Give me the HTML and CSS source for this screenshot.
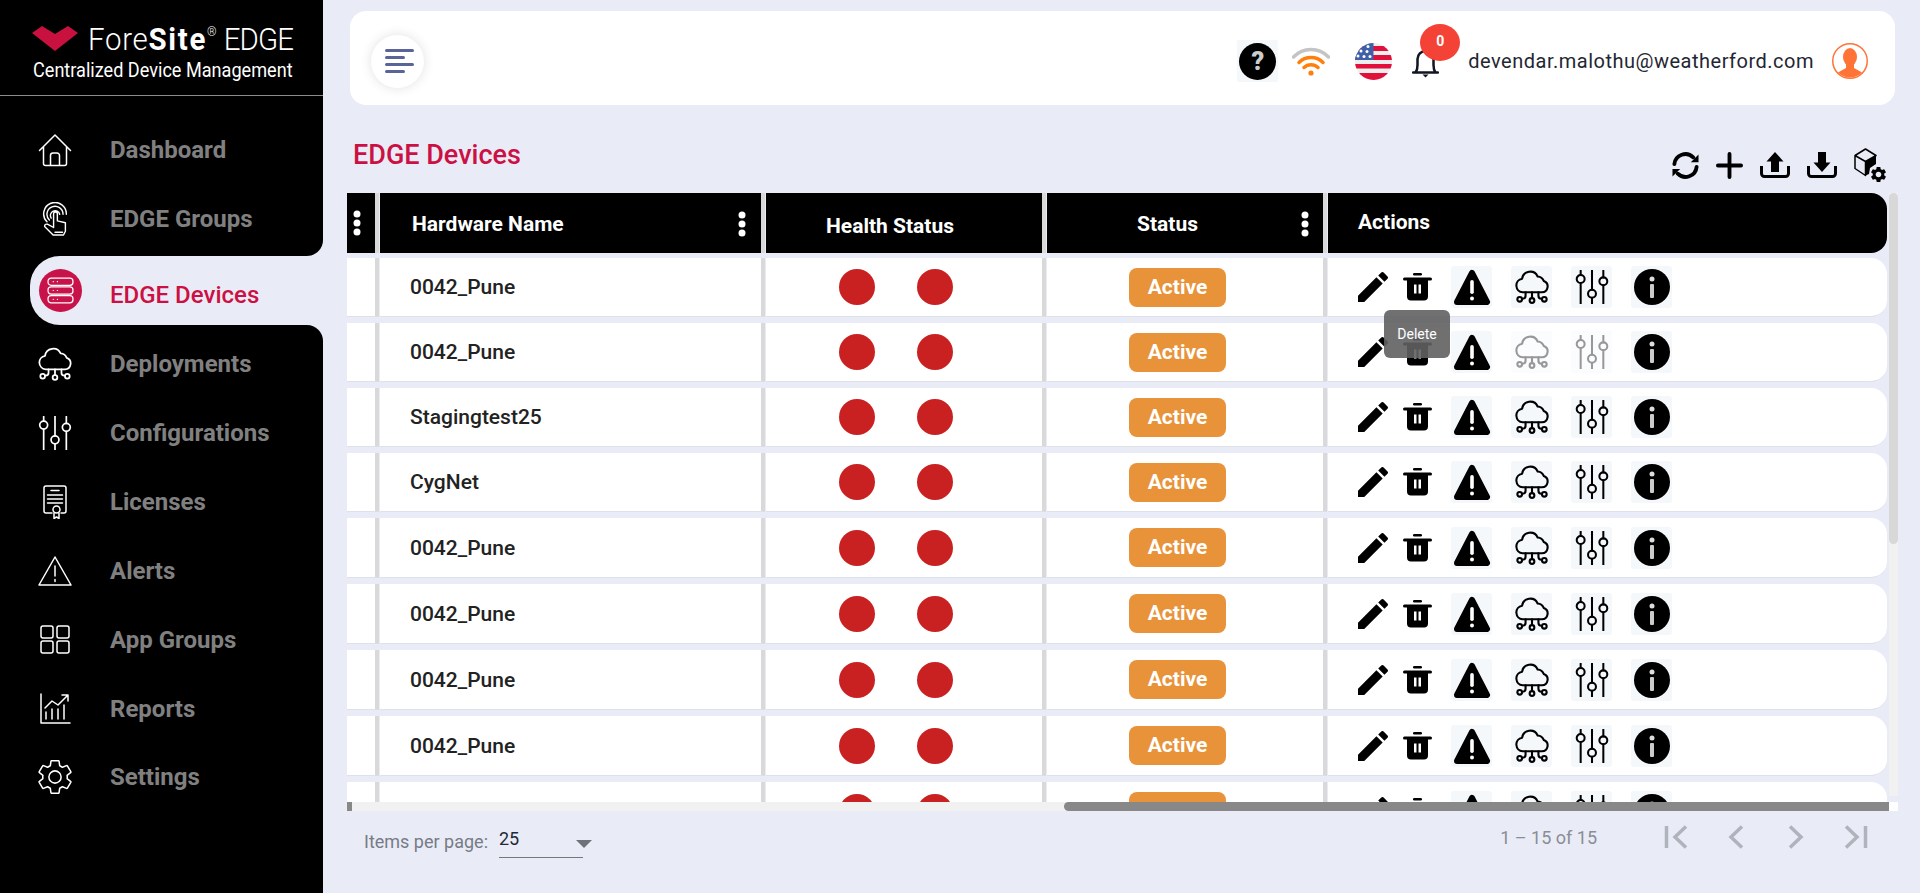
FILE: index.html
```html
<!DOCTYPE html>
<html>
<head>
    <meta charset="utf-8">
    <title>ForeSite EDGE - EDGE Devices</title>
    <link rel="stylesheet" href="styles.css">
</head>
<body>

<!-- shared icons -->
<svg class="icon-defs" xmlns="http://www.w3.org/2000/svg">
    <symbol id="i-cloud" viewBox="2 1 28 29">
        <path d="M8 20H24.500A5 5 0 0 0 26 10.300A6 6 0 0 0 20.800 6.500A7 7 0 0 0 7.500 8.500A5.800 5.800 0 0 0 8 20Z"/>
        <path d="M16 20V25M10.500 20V23Q10.500 25.500 8 25.500H7.500M21.500 20V23Q21.500 25.500 24 25.500H24.500"/>
        <circle cx="5.500" cy="26" r="2"/><circle cx="16" cy="27" r="2"/><circle cx="26.500" cy="26" r="2"/>
    </symbol>
    <symbol id="i-sliders" viewBox="2 1 28 30">
        <path d="M6 1.500V5.500M6 12.500V31M16 1V18.500M16 25.500V31M26 1.500V7.500M26 14.500V31"/>
        <circle cx="6" cy="9" r="3.500"/><circle cx="16" cy="22" r="3.500"/><circle cx="26" cy="11" r="3.500"/>
    </symbol>
    <symbol id="i-pencil" viewBox="3 3 18 18">
        <path d="M3 17.250V21h3.750L17.810 9.940l-3.750-3.750L3 17.250zM20.710 7.040c.39-.39.39-1.020 0-1.410l-2.340-2.340c-.39-.39-1.020-.39-1.410 0l-1.830 1.830 3.750 3.750 1.830-1.830z"/>
    </symbol>
    <symbol id="i-trash" viewBox="0 0 29 28">
        <rect x="10" y="0" width="9" height="2.600" rx="1.300"/>
        <rect x="0" y="4.500" width="29" height="3" rx="1.500"/>
        <path fill-rule="evenodd" d="M4 7H25V23.500A4 4 0 0 1 21 27.500H8A4 4 0 0 1 4 23.500ZM11 11.500V20.500H13.500V11.500ZM15.500 11.500V20.500H18V11.500Z"/>
    </symbol>
    <symbol id="i-warn" viewBox="0 0 38 36">
        <path d="M19 4L34 33H4Z" fill="#000" stroke="#000" stroke-width="6" stroke-linejoin="round"/>
        <rect x="17.200" y="11" width="3.600" height="14" rx="1.800" fill="#fff"/>
        <circle cx="19" cy="29.500" r="2" fill="#fff"/>
    </symbol>
    <symbol id="i-info" viewBox="0 0 36 36">
        <circle cx="18" cy="18" r="18" fill="#000"/>
        <circle cx="18" cy="10" r="2.500" fill="#ddd"/>
        <rect x="16" y="15" width="4" height="14" rx="1" fill="#ccc"/>
    </symbol>
    <symbol id="i-kebab" viewBox="0 0 8 26">
        <circle cx="4" cy="4" r="3.500"/><circle cx="4" cy="13" r="3.500"/><circle cx="4" cy="22" r="3.500"/>
    </symbol>
    <symbol id="i-gear" viewBox="0 0 24 24">
        <path d="M19.140 12.940c.04-.3.06-.61.06-.94 0-.32-.02-.64-.07-.94l2.030-1.580a.49.49 0 0 0 .12-.61l-1.920-3.320a.488.488 0 0 0-.59-.22l-2.390.96c-.5-.38-1.030-.7-1.620-.94l-.36-2.540a.484.484 0 0 0-.48-.41h-3.840c-.24 0-.43.17-.47.41l-.36 2.540c-.59.24-1.130.57-1.620.94l-2.390-.96c-.22-.08-.47 0-.59.22L2.740 8.870c-.12.21-.08.47.12.61l2.030 1.580c-.05.3-.09.63-.09.94s.02.64.07.94l-2.030 1.580a.49.49 0 0 0-.12.61l1.920 3.320c.12.22.37.29.59.22l2.390-.96c.5.38 1.030.7 1.620.94l.36 2.540c.05.24.24.41.48.41h3.840c.24 0 .44-.17.47-.41l.36-2.540c.59-.24 1.130-.56 1.620-.94l2.390.96c.22.08.47 0 .59-.22l1.920-3.320c.12-.22.07-.47-.12-.61l-2.010-1.580zM12 15.600c-1.980 0-3.600-1.620-3.600-3.600s1.620-3.600 3.600-3.600 3.600 1.620 3.600 3.600-1.620 3.600-3.600 3.600z"/>
    </symbol>
</svg>

<div class="sidebar">
    <div class="brand">
        <div class="brand-top">
            <svg class="brand-mark" viewBox="0 0 46 26"><path d="M0 7L10 0L23 8L36 0L46 7L23 25Z"/></svg>
            <span class="brand-name"><span class="brand-fore">Fore</span><b>Site</b><sup>®</sup> <span class="brand-edge">EDGE</span></span>
        </div>
        <div class="brand-sub">Centralized Device Management</div>
    </div>

    <ul class="nav">
        <li class="nav-item">
            <svg class="nav-icon" viewBox="0 0 34 34"><path d="M1.500 17.500L17 2L32.500 17.500M5.500 14V30.500A2 2 0 0 0 7.500 32.500H26.500A2 2 0 0 0 28.500 30.500V14M12.500 32.500V22.500A2.500 2.500 0 0 1 15 20H19A2.500 2.500 0 0 1 21.500 22.500V32.500"/></svg>
            <span>Dashboard</span>
        </li>
        <li class="nav-item before-active">
            <svg class="nav-icon" viewBox="0 0 26 36"><path d="M4.500 21A12 12 0 1 1 25 13M7 19A8.500 8.500 0 1 1 21.500 13M9 17A5 5 0 1 1 18 13M11.500 27V12.500A2 2 0 0 1 15.500 12.500V20L24 22V31L22 35H11L2 26Q2 23 5 23.500L11.500 27M13 32H21"/></svg>
            <span>EDGE Groups</span>
        </li>
        <li class="nav-item active">
            <a class="nav-link">
                <span class="active-badge">
                    <svg viewBox="0 0 26 26"><rect x="1" y="1" width="24" height="7" rx="3"/><rect x="1" y="9.500" width="24" height="7" rx="3"/><rect x="1" y="18" width="24" height="7" rx="3"/><path d="M6 4.500H6.100M10 4.500H10.100M6 13H6.100M10 13H10.100M6 21.500H6.100M10 21.500H10.100"/></svg>
                </span>
                <span class="active-text">EDGE Devices</span>
            </a>
        </li>
        <li class="nav-item after-active">
            <svg class="nav-icon"><use href="#i-cloud"/></svg>
            <span>Deployments</span>
        </li>
        <li class="nav-item">
            <svg class="nav-icon"><use href="#i-sliders"/></svg>
            <span>Configurations</span>
        </li>
        <li class="nav-item">
            <svg class="nav-icon" viewBox="0 0 34 34"><path d="M14 28H8A2 2 0 0 1 6 26V3A2 2 0 0 1 8 1H26A2 2 0 0 1 28 3V26A2 2 0 0 1 26 28H23M13 5.500H21M9.500 10H24.500M9.500 14H24.500M9.500 18H24.500M16 28V33.500L18.500 32L21 33.500V28"/><circle cx="18.500" cy="24.500" r="3.500"/></svg>
            <span>Licenses</span>
        </li>
        <li class="nav-item">
            <svg class="nav-icon" viewBox="0 0 34 34"><path d="M17 3L33 31H1ZM17 12V22M17 25.500V27.500"/></svg>
            <span>Alerts</span>
        </li>
        <li class="nav-item">
            <svg class="nav-icon" viewBox="0 0 34 34"><rect x="3" y="3" width="12" height="12" rx="2"/><rect x="19" y="3" width="12" height="12" rx="2"/><rect x="3" y="18" width="12" height="12" rx="2"/><rect x="19" y="18" width="12" height="12" rx="2"/></svg>
            <span>App Groups</span>
        </li>
        <li class="nav-item">
            <svg class="nav-icon" viewBox="0 0 34 34"><path d="M3 2V31H32M8 27V20M14 27V17M20 27V17M26 27V13M7 16L14 9L20 13L30 3M24 3H30V9"/></svg>
            <span>Reports</span>
        </li>
        <li class="nav-item">
            <svg class="nav-icon nav-gear" viewBox="2 2 20 20"><use href="#i-gear" width="24" height="24"/></svg>
            <span class="last-text">Settings</span>
        </li>
    </ul>
</div>

<div class="main">
    <div class="topbar">
        <div class="menu-btn">
            <span class="bar"></span><span class="bar short"></span><span class="bar"></span><span class="bar short"></span>
        </div>

        <div class="help-box">
            <span class="help">?</span>
        </div>
        <svg class="wifi" viewBox="0 0 38 32">
            <path class="wifi-off" d="M1.500 12A24 24 0 0 1 36.500 12"/>
            <path d="M7 17.500A17 17 0 0 1 31 17.500M12 22.500A10 10 0 0 1 26 22.500"/>
            <circle cx="19" cy="28" r="2.600"/>
        </svg>
        <svg class="flag" viewBox="0 0 37 37">
            <clipPath id="flag-clip"><circle cx="18.500" cy="18.500" r="18.500"/></clipPath>
            <g clip-path="url(#flag-clip)">
                <rect width="37" height="37" fill="#eeeeee"/>
                <rect y="3" width="37" height="5" fill="#e0103a"/>
                <rect y="12" width="37" height="5" fill="#e0103a"/>
                <rect y="21" width="37" height="4.500" fill="#e0103a"/>
                <rect y="30" width="37" height="7" fill="#e0103a"/>
                <rect width="18.500" height="17" fill="#3f60a8"/>
                <g fill="#fff"><circle cx="13" cy="3.500" r="1.500"/><circle cx="6" cy="8" r="1.500"/><circle cx="12" cy="8.500" r="1.500"/><circle cx="3" cy="13" r="1.500"/><circle cx="9" cy="13.500" r="1.500"/><circle cx="15" cy="13.500" r="1.500"/></g>
            </g>
        </svg>
        <div class="bell-wrap">
            <svg class="bell" viewBox="0 0 27 30">
                <path d="M1 24.500H26M3.500 24.500C5 22.500 5.500 20 5.500 17V11A8 8 0 0 1 21.500 11V17C21.500 20 22 22.500 23.500 24.500"/>
                <path class="bell-clap" d="M10.500 26.500H16.500L13.500 29.500Z"/>
            </svg>
            <span class="badge">0</span>
        </div>
        <span class="user-mail">devendar.malothu@weatherford.com</span>
        <svg class="avatar" viewBox="0 0 36 36">
            <clipPath id="avatar-clip"><circle cx="18" cy="18" r="16.500"/></clipPath>
            <circle cx="18" cy="18" r="17.250" fill="#fff" stroke="#ff7337" stroke-width="1.500"/>
            <g clip-path="url(#avatar-clip)" fill="#ff7337">
                <ellipse cx="18" cy="14" rx="7" ry="9"/>
                <path d="M14 20H22V25L31 30V36H5V30L14 25Z"/>
            </g>
        </svg>
    </div>

    <div class="title-row">
        <h1 class="page-title">EDGE Devices</h1>
        <div class="toolbar">
            <svg class="tool refresh" viewBox="0 0 28 28">
                <path class="tool-line" d="M2.500 12.500A11.500 11.500 0 0 1 22 5.500M25.500 15.500A11.500 11.500 0 0 1 6 22.500"/>
                <path d="M27.500 2.500V10.500H19.500ZM.5 25.500V17.500H8.500Z"/>
            </svg>
            <svg class="tool plus" viewBox="0 0 28 28">
                <path class="tool-line" d="M14 2V26M2 14H26"/>
            </svg>
            <svg class="tool load" viewBox="0 0 30 26">
                <path class="tray" d="M1.500 14V21.500A3 3 0 0 0 4.500 24.500H25.500A3 3 0 0 0 28.500 21.500V14"/>
                <path d="M15 0L23.500 9.500H19V20H11V9.500H6.500Z"/>
            </svg>
            <svg class="tool load" viewBox="0 0 30 26">
                <path class="tray" d="M1.500 14V21.500A3 3 0 0 0 4.500 24.500H25.500A3 3 0 0 0 28.500 21.500V14"/>
                <path d="M11 0H19V10.500H23.500L15 20L6.500 10.500H11Z"/>
            </svg>
            <svg class="tool box" viewBox="0 0 34 36">
                <path class="box-line" d="M11.500 1L22 7.500L11.500 13.500L1 7.500ZM1 7.500V20.500L11.500 27.500V13.500"/>
                <path d="M11.500 13.500L22 7.500V16L16 20L15 26L11.500 27.500Z"/>
                <svg x="15" y="17" width="19" height="19" viewBox="0 0 24 24"><use href="#i-gear" width="24" height="24"/></svg>
            </svg>
        </div>
    </div>

    <div class="table-area">
        <div class="table-view">
            <div class="tbl-row tbl-head">
                <div class="th th-first"><svg class="kebab"><use href="#i-kebab"/></svg></div>
                <div class="th th-name"><span>Hardware Name</span><svg class="kebab"><use href="#i-kebab"/></svg></div>
                <div class="th th-health"><span>Health Status</span></div>
                <div class="th th-status"><span>Status</span><svg class="kebab"><use href="#i-kebab"/></svg></div>
                <div class="th th-actions"><span>Actions</span></div>
            </div>

            <div class="tbl-row">
                <div class="td"></div>
                <div class="td td-name">0042_Pune</div>
                <div class="td td-health"><i class="dot"></i><i class="dot"></i></div>
                <div class="td td-status"><span class="pill">Active</span></div>
                <div class="td td-actions">
                    <svg class="act-pencil"><use href="#i-pencil"/></svg>
                    <div class="act-trash">
                        <svg class="trash-svg"><use href="#i-trash"/></svg>
                        <div class="tooltip">Delete</div>
                    </div>
                    <div class="act-box"><svg class="warn-svg"><use href="#i-warn"/></svg></div>
                    <div class="act-box"><svg class="line-svg"><use href="#i-cloud"/></svg></div>
                    <div class="act-box"><svg class="line-svg"><use href="#i-sliders"/></svg></div>
                    <div class="act-box"><svg class="info-svg"><use href="#i-info"/></svg></div>
                </div>
            </div>

            <div class="tbl-row">
                <div class="td"></div>
                <div class="td td-name">0042_Pune</div>
                <div class="td td-health"><i class="dot"></i><i class="dot"></i></div>
                <div class="td td-status"><span class="pill">Active</span></div>
                <div class="td td-actions">
                    <svg class="act-pencil"><use href="#i-pencil"/></svg>
                    <div class="act-trash"><svg class="trash-svg"><use href="#i-trash"/></svg></div>
                    <div class="act-box"><svg class="warn-svg"><use href="#i-warn"/></svg></div>
                    <div class="act-box disabled"><svg class="line-svg"><use href="#i-cloud"/></svg></div>
                    <div class="act-box disabled"><svg class="line-svg"><use href="#i-sliders"/></svg></div>
                    <div class="act-box"><svg class="info-svg"><use href="#i-info"/></svg></div>
                </div>
            </div>

            <div class="tbl-row">
                <div class="td"></div>
                <div class="td td-name">Stagingtest25</div>
                <div class="td td-health"><i class="dot"></i><i class="dot"></i></div>
                <div class="td td-status"><span class="pill">Active</span></div>
                <div class="td td-actions">
                    <svg class="act-pencil"><use href="#i-pencil"/></svg>
                    <div class="act-trash"><svg class="trash-svg"><use href="#i-trash"/></svg></div>
                    <div class="act-box"><svg class="warn-svg"><use href="#i-warn"/></svg></div>
                    <div class="act-box"><svg class="line-svg"><use href="#i-cloud"/></svg></div>
                    <div class="act-box"><svg class="line-svg"><use href="#i-sliders"/></svg></div>
                    <div class="act-box"><svg class="info-svg"><use href="#i-info"/></svg></div>
                </div>
            </div>

            <div class="tbl-row">
                <div class="td"></div>
                <div class="td td-name">CygNet</div>
                <div class="td td-health"><i class="dot"></i><i class="dot"></i></div>
                <div class="td td-status"><span class="pill">Active</span></div>
                <div class="td td-actions">
                    <svg class="act-pencil"><use href="#i-pencil"/></svg>
                    <div class="act-trash"><svg class="trash-svg"><use href="#i-trash"/></svg></div>
                    <div class="act-box"><svg class="warn-svg"><use href="#i-warn"/></svg></div>
                    <div class="act-box"><svg class="line-svg"><use href="#i-cloud"/></svg></div>
                    <div class="act-box"><svg class="line-svg"><use href="#i-sliders"/></svg></div>
                    <div class="act-box"><svg class="info-svg"><use href="#i-info"/></svg></div>
                </div>
            </div>

            <div class="tbl-row row-tall">
                <div class="td"></div>
                <div class="td td-name">0042_Pune</div>
                <div class="td td-health"><i class="dot"></i><i class="dot"></i></div>
                <div class="td td-status"><span class="pill">Active</span></div>
                <div class="td td-actions">
                    <svg class="act-pencil"><use href="#i-pencil"/></svg>
                    <div class="act-trash"><svg class="trash-svg"><use href="#i-trash"/></svg></div>
                    <div class="act-box"><svg class="warn-svg"><use href="#i-warn"/></svg></div>
                    <div class="act-box"><svg class="line-svg"><use href="#i-cloud"/></svg></div>
                    <div class="act-box"><svg class="line-svg"><use href="#i-sliders"/></svg></div>
                    <div class="act-box"><svg class="info-svg"><use href="#i-info"/></svg></div>
                </div>
            </div>

            <div class="tbl-row row-tall">
                <div class="td"></div>
                <div class="td td-name">0042_Pune</div>
                <div class="td td-health"><i class="dot"></i><i class="dot"></i></div>
                <div class="td td-status"><span class="pill">Active</span></div>
                <div class="td td-actions">
                    <svg class="act-pencil"><use href="#i-pencil"/></svg>
                    <div class="act-trash"><svg class="trash-svg"><use href="#i-trash"/></svg></div>
                    <div class="act-box"><svg class="warn-svg"><use href="#i-warn"/></svg></div>
                    <div class="act-box"><svg class="line-svg"><use href="#i-cloud"/></svg></div>
                    <div class="act-box"><svg class="line-svg"><use href="#i-sliders"/></svg></div>
                    <div class="act-box"><svg class="info-svg"><use href="#i-info"/></svg></div>
                </div>
            </div>

            <div class="tbl-row row-tall">
                <div class="td"></div>
                <div class="td td-name">0042_Pune</div>
                <div class="td td-health"><i class="dot"></i><i class="dot"></i></div>
                <div class="td td-status"><span class="pill">Active</span></div>
                <div class="td td-actions">
                    <svg class="act-pencil"><use href="#i-pencil"/></svg>
                    <div class="act-trash"><svg class="trash-svg"><use href="#i-trash"/></svg></div>
                    <div class="act-box"><svg class="warn-svg"><use href="#i-warn"/></svg></div>
                    <div class="act-box"><svg class="line-svg"><use href="#i-cloud"/></svg></div>
                    <div class="act-box"><svg class="line-svg"><use href="#i-sliders"/></svg></div>
                    <div class="act-box"><svg class="info-svg"><use href="#i-info"/></svg></div>
                </div>
            </div>

            <div class="tbl-row row-tall">
                <div class="td"></div>
                <div class="td td-name">0042_Pune</div>
                <div class="td td-health"><i class="dot"></i><i class="dot"></i></div>
                <div class="td td-status"><span class="pill">Active</span></div>
                <div class="td td-actions">
                    <svg class="act-pencil"><use href="#i-pencil"/></svg>
                    <div class="act-trash"><svg class="trash-svg"><use href="#i-trash"/></svg></div>
                    <div class="act-box"><svg class="warn-svg"><use href="#i-warn"/></svg></div>
                    <div class="act-box"><svg class="line-svg"><use href="#i-cloud"/></svg></div>
                    <div class="act-box"><svg class="line-svg"><use href="#i-sliders"/></svg></div>
                    <div class="act-box"><svg class="info-svg"><use href="#i-info"/></svg></div>
                </div>
            </div>

            <div class="tbl-row row-tall">
                <div class="td"></div>
                <div class="td td-name"></div>
                <div class="td td-health"><i class="dot"></i><i class="dot"></i></div>
                <div class="td td-status"><span class="pill">Active</span></div>
                <div class="td td-actions">
                    <svg class="act-pencil"><use href="#i-pencil"/></svg>
                    <div class="act-trash"><svg class="trash-svg"><use href="#i-trash"/></svg></div>
                    <div class="act-box"><svg class="warn-svg"><use href="#i-warn"/></svg></div>
                    <div class="act-box"><svg class="line-svg"><use href="#i-cloud"/></svg></div>
                    <div class="act-box"><svg class="line-svg"><use href="#i-sliders"/></svg></div>
                    <div class="act-box"><svg class="info-svg"><use href="#i-info"/></svg></div>
                </div>
            </div>
        </div>

        <div class="v-scroll"><div class="v-thumb"></div></div>

        <div class="h-scroll">
            <span class="h-tick"></span>
            <span class="h-thumb"></span>
            <span class="h-corner"></span>
        </div>
    </div>

    <div class="pager">
        <div class="pager-left">
            <span class="pager-label">Items per page:</span>
            <div class="page-select">25<i class="select-arrow"></i></div>
        </div>
        <div class="pager-right">
            <span class="pager-range">1 – 15 of 15</span>
            <div class="pager-btn"><svg viewBox="0 0 24 24"><path d="M2.500 1V23M22 1.500L11 12L22 22.500"/></svg></div>
            <div class="pager-btn"><svg viewBox="0 0 24 24"><path d="M18 1.500L7 12L18 22.500"/></svg></div>
            <div class="pager-btn"><svg viewBox="0 0 24 24"><path d="M6 1.500L17 12L6 22.500"/></svg></div>
            <div class="pager-btn"><svg viewBox="0 0 24 24"><path d="M21.500 1V23M2 1.500L13 12L2 22.500"/></svg></div>
        </div>
    </div>
</div>

</body>
</html>
```

FILE: styles.css
```css
* {
    box-sizing: border-box;
}

html, body {
    margin: 0;
    height: 100%;
    overflow: hidden;
}

body {
    display: flex;
    background: #e9ecf7;
    font-family: Roboto, "Liberation Sans", sans-serif;
    color: #222;
}

.icon-defs {
    display: none;
}

/* Sidebar */
.sidebar {
    width: 323px;
    flex-shrink: 0;
    background: #000;
    display: flex;
    flex-direction: column;
}

.brand {
    height: 96px;
    flex-shrink: 0;
    padding: 26px 0 0 32px;
    border-bottom: 1px solid #8c8c8c;
    color: #fff;
}

.brand-top {
    display: flex;
    align-items: center;
    height: 26px;
}

.brand-mark {
    width: 46px;
    height: 26px;
    fill: #c8113e;
    margin-right: 10px;
    flex-shrink: 0;
}

.brand-name {
    font-size: 32px;
    font-weight: 300;
    line-height: 26px;
    white-space: nowrap;
    transform: scaleX(.92);
    transform-origin: left center;
}

.brand-fore {
    letter-spacing: .8px;
}

.brand-name b {
    font-weight: 700;
    letter-spacing: 1.800px;
}

.brand-edge {
    letter-spacing: -1px;
}

.brand-name sup {
    font-size: 13px;
    line-height: 0;
    vertical-align: 14px;
}

.brand-sub {
    font-size: 20px;
    line-height: 22px;
    margin-top: 7px;
    margin-left: 1px;
    white-space: nowrap;
    transform: scaleX(.905);
    transform-origin: left center;
}

.nav {
    list-style: none;
    margin: 0;
    padding: 0;
    flex: 1;
    min-height: 0;
    display: flex;
    flex-direction: column;
    background: linear-gradient(to right, #000 50%, #e9ecf7 50%);
}

.nav-item {
    display: flex;
    align-items: center;
    height: 69px;
    flex-shrink: 0;
    padding-left: 38px;
    background: #000;
    color: #808080;
    font-size: 24px;
    font-weight: 700;
}

.nav-item:first-child {
    height: 88px;
    padding-top: 19px;
}

.nav-item:last-child {
    flex: 1;
    align-items: flex-start;
    padding-top: 17px;
}

.last-text {
    margin-top: 3px;
}

.nav-item.before-active {
    height: 72px;
    padding-bottom: 3px;
    border-bottom-right-radius: 16px;
}

.nav-item.after-active {
    height: 73px;
    padding-top: 5px;
    border-top-right-radius: 16px;
}

.nav-item.active {
    padding-left: 30px;
}

.nav-link {
    display: flex;
    align-items: center;
    flex: 1;
    height: 100%;
    padding-left: 9px;
    background: #e9ecf7;
    border-radius: 30px 0 0 30px;
    color: #cc1043;
    font-weight: 500;
}

.nav-icon {
    width: 34px;
    height: 34px;
    margin-right: 38px;
    fill: none;
    stroke: #fff;
    stroke-width: 1.500;
    stroke-linecap: round;
    stroke-linejoin: round;
    flex-shrink: 0;
}

.nav-gear {
    stroke-width: .9;
}

.active-badge {
    width: 43px;
    height: 43px;
    border-radius: 50%;
    background: #c8134a;
    display: flex;
    align-items: center;
    justify-content: center;
    margin-right: 28px;
    flex-shrink: 0;
}

.active-text {
    margin-top: 9px;
}

.active-badge svg {
    width: 27px;
    height: 27px;
    fill: none;
    stroke: #fff;
    stroke-width: 1.200;
    stroke-linecap: round;
}

/* Main */
.main {
    flex: 1;
    min-width: 0;
    padding: 11px 22px 0 24px;
    display: flex;
    flex-direction: column;
}

.topbar {
    height: 94px;
    flex-shrink: 0;
    margin: 0 3px;
    padding: 6px 27px 0 21px;
    background: #fff;
    border-radius: 16px;
    display: flex;
    align-items: center;
}

.menu-btn {
    width: 53px;
    height: 53px;
    margin-right: auto;
    padding-left: 14px;
    border-radius: 50%;
    background: #fff;
    box-shadow: 0 0 12px rgba(0, 0, 0, 0.12);
    display: flex;
    flex-direction: column;
    justify-content: center;
    gap: 4px;
}

.bar {
    display: block;
    width: 29px;
    height: 3px;
    border-radius: 2px;
    background: #5a6499;
}

.bar.short {
    width: 20px;
}

.help-box {
    width: 41px;
    height: 42px;
    background: #f5f8fb;
    border-radius: 2px;
    display: flex;
    align-items: center;
    justify-content: center;
}

.help {
    width: 37px;
    height: 37px;
    border-radius: 50%;
    background: #000;
    color: #ccc;
    font-size: 25px;
    font-weight: 900;
    line-height: 37px;
    text-align: center;
}

.wifi {
    width: 38px;
    height: 32px;
    margin-left: 14px;
    fill: #ff7f0a;
    stroke: none;
}

.wifi path {
    fill: none;
    stroke: #ff7f0a;
    stroke-width: 3.500;
    stroke-linecap: round;
}

.wifi .wifi-off {
    stroke: #c4c4c4;
}

.flag {
    width: 37px;
    height: 37px;
    margin-left: 25px;
}

.bell-wrap {
    position: relative;
    width: 27px;
    height: 30px;
    margin-left: 20px;
    margin-top: 3px;
}

.bell {
    display: block;
    width: 27px;
    height: 30px;
    fill: none;
    stroke: #10151f;
    stroke-width: 2.500;
    stroke-linecap: round;
}

.bell .bell-clap {
    fill: #10151f;
    stroke: none;
}

.badge {
    position: absolute;
    left: 8px;
    top: -24px;
    width: 40px;
    height: 37px;
    border-radius: 50%;
    background: #f44336;
    color: #fff;
    font-size: 14px;
    font-weight: 700;
    line-height: 34px;
    text-align: center;
}

.user-mail {
    margin-left: 29px;
    font-size: 20px;
    letter-spacing: .5px;
    color: #1f2733;
    white-space: nowrap;
}

.avatar {
    width: 36px;
    height: 36px;
    margin-left: 18px;
}

.title-row {
    height: 88px;
    flex-shrink: 0;
    display: flex;
    justify-content: space-between;
    padding-right: 10px;
}

.page-title {
    margin: 35px 0 0 6px;
    font-size: 27px;
    line-height: 30px;
    font-weight: 500;
    color: #cc1043;
}

.toolbar {
    display: flex;
    align-items: flex-start;
    gap: 17px;
    padding-top: 47px;
}

.tool {
    width: 27px;
    height: 27px;
    fill: #000;
    flex-shrink: 0;
}

.tool-line {
    fill: none;
    stroke: #000;
    stroke-width: 4;
    stroke-linecap: round;
}

.tool.load {
    width: 30px;
    height: 26px;
}

.tray {
    fill: none;
    stroke: #000;
    stroke-width: 3;
}

.tool.box {
    width: 34px;
    height: 36px;
    margin-top: -4px;
}

.box-line {
    fill: none;
    stroke: #000;
    stroke-width: 1.500;
    stroke-linejoin: round;
}

/* Table */
.table-area {
    display: grid;
    grid-template-columns: 1540px 9px;
    grid-template-rows: 609px 9px;
    column-gap: 2px;
    flex-shrink: 0;
}

.table-view {
    overflow: hidden;
    display: flex;
    flex-direction: column;
    gap: 6px;
}

.tbl-row {
    display: grid;
    grid-template-columns: 32px 385px 280px 280px 559px;
    column-gap: 1px;
    flex-shrink: 0;
    height: 59px;
}

.row-tall {
    height: 60px;
}

.tbl-head {
    height: 60px;
    margin-bottom: -1px;
}

.th, .td {
    border-right: 4px solid #d9d9d9;
    display: flex;
    align-items: center;
}

.th {
    background: #000;
    color: #fff;
    font-size: 21px;
    font-weight: 700;
}

.td {
    background: #fff;
    border-bottom: 1px solid #dfe1e9;
}

.th:last-child, .td:last-child {
    border-right: 0;
    border-radius: 0 16px 16px 0;
}

.kebab {
    width: 8px;
    height: 26px;
    fill: #fff;
    flex-shrink: 0;
}

.th-first {
    padding-left: 6px;
}

.th-name {
    padding: 2px 15px 0 32px;
    justify-content: space-between;
}

.th-health {
    padding: 6px 0 0 60px;
}

.th-status {
    padding: 2px 14px 0 90px;
    justify-content: space-between;
}

.th-actions {
    padding: 0 0 2px 30px;
}

.td-name {
    padding-left: 30px;
    font-size: 21px;
    font-weight: 500;
    color: #222;
}

.td-health {
    justify-content: center;
    gap: 42px;
    padding-right: 16px;
}

.dot {
    width: 36px;
    height: 36px;
    border-radius: 50%;
    background: #c92121;
}

.td-status {
    justify-content: center;
    padding-right: 15px;
}

.pill {
    width: 97px;
    height: 39px;
    border-radius: 8px;
    background: #e8933a;
    color: #fff;
    font-size: 21px;
    font-weight: 700;
    line-height: 39px;
    text-align: center;
}

.td-actions {
    padding-left: 30px;
}

.act-pencil {
    width: 30px;
    height: 30px;
    margin-right: 15px;
    fill: #000;
    flex-shrink: 0;
}

.act-trash {
    position: relative;
    width: 29px;
    height: 28px;
    margin-right: 19px;
    flex-shrink: 0;
}

.trash-svg {
    display: block;
    width: 29px;
    height: 28px;
    fill: #000;
}

.tooltip {
    position: absolute;
    left: -19px;
    top: 37px;
    z-index: 2;
    width: 66px;
    height: 48px;
    border-radius: 6px;
    background: rgba(97, 97, 97, 0.9);
    color: #fff;
    font-size: 14px;
    line-height: 48px;
    text-align: center;
}

.act-box {
    width: 41px;
    height: 42px;
    margin-right: 19px;
    background: #f5f8fb;
    border-radius: 3px;
    display: flex;
    align-items: center;
    justify-content: center;
    flex-shrink: 0;
}

.act-box.disabled {
    opacity: 0.4;
}

.warn-svg {
    width: 38px;
    height: 36px;
}

.line-svg {
    width: 36px;
    height: 34px;
    fill: none;
    stroke: #000;
    stroke-width: 1.800;
    stroke-linecap: round;
    stroke-linejoin: round;
}

.info-svg {
    width: 36px;
    height: 36px;
}

/* Scrollbars */
.v-scroll {
    height: 603px;
    background: #f1f1f1;
}

.v-thumb {
    height: 351px;
    border-radius: 5px;
    background: #d8d8d8;
}

.h-scroll {
    grid-column: 1 / -1;
    display: flex;
    background: #f1f1f1;
}

.h-tick {
    width: 5px;
    background: #888;
}

.h-thumb {
    width: 825px;
    margin-left: auto;
    border-radius: 5px 0 0 5px;
    background: #888;
}

.h-corner {
    width: 9px;
    background: #fff;
}

/* Pagination */
.pager {
    flex: 1;
    display: flex;
    justify-content: space-between;
    align-items: flex-start;
    padding: 14px 12px 0 17px;
    font-size: 18px;
}

.pager-left, .pager-right {
    display: flex;
    align-items: center;
}

.pager-label {
    color: #777b85;
    margin-right: 11px;
}

.page-select {
    position: relative;
    width: 84px;
    height: 33px;
    line-height: 28px;
    border-bottom: 1px solid #777;
    color: #222a35;
}

.select-arrow {
    position: absolute;
    right: -9px;
    top: 15px;
    border-left: 8px solid transparent;
    border-right: 8px solid transparent;
    border-top: 8px solid #6f7178;
}

.pager-range {
    color: #8a8d95;
    margin-right: 49px;
}

.pager-btn {
    width: 60px;
    height: 24px;
    display: flex;
    justify-content: center;
}

.pager-btn svg {
    width: 24px;
    height: 24px;
    fill: none;
    stroke: #b0b3bb;
    stroke-width: 3.500;
}
```
